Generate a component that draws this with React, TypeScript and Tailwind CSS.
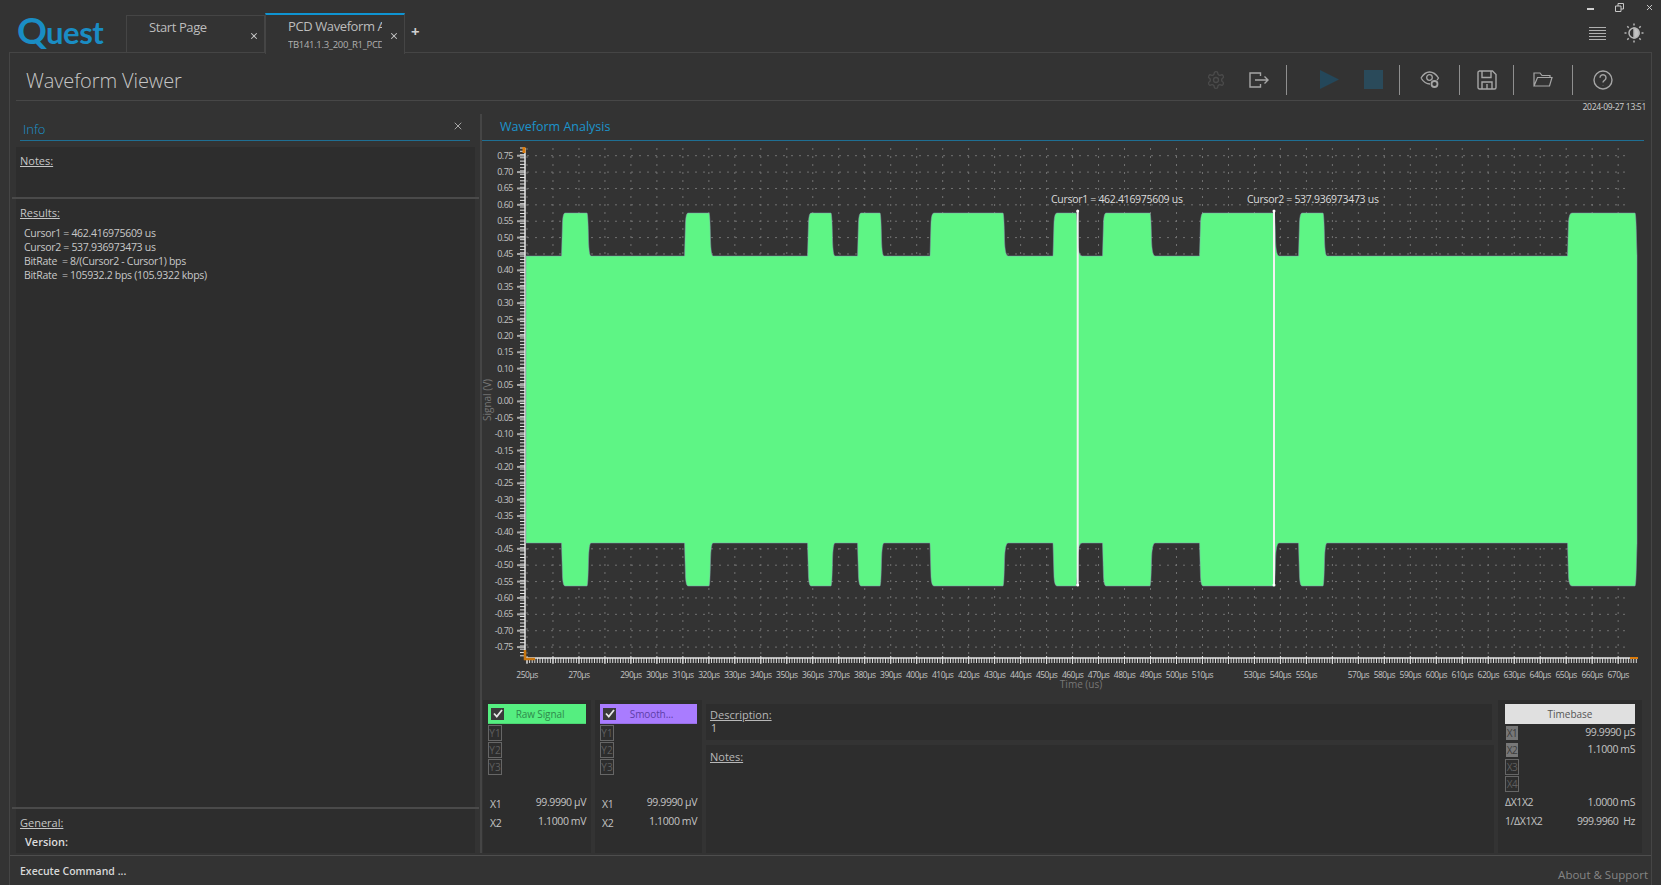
import { X } from "lucide-react";

const PULSES = [
  [561.5, 564, 587, 591],
  [684.5, 687, 709, 713],
  [807.5, 810, 831, 835],
  [857.5, 860, 880, 884],
  [930, 933, 1003, 1008],
  [1053, 1056, 1076, 1082],
  [1102.5, 1105, 1150, 1155],
  [1199.5, 1202, 1274, 1279],
  [1298.5, 1301, 1323, 1327],
  [1567.5, 1571, 1635, 1637],
];

const SKIP_LABELS = [260, 280, 520, 560];
const FONT = "font-['Open_Sans','Noto_Sans',sans-serif]";

function waveformPath() {
  const top = PULSES.map(([a, b, c, d]) => `L${a} 256 L${a + 1} 222 Q${a + 1.5} 213 ${b + 1} 213 L${c} 213 Q${c + 1} 213 ${c + 1.5} 240 Q${c + 2} 256 ${d} 256`).join(" ");
  const bottom = [...PULSES].reverse().map(([a, b, c, d]) => `L${d} 543 Q${c + 2} 543 ${c + 1.5} 560 Q${c + 1} 586 ${c} 586 L${b + 1} 586 Q${a + 1.5} 586 ${a + 1} 577 L${a} 543`).join(" ");
  return `M526 256 ${top} L1637 256 L1637 543 ${bottom} L526 543 Z`;
}

function yLabel(i: number) {
  const v = 0.75 - i * 0.05;
  return Math.abs(v) < 0.001 ? "0.00" : v.toFixed(2);
}

function Chart() {
  const ys = Array.from({ length: 31 }, (_, i) => 155.7 + i * 16.38);
  const xs = Array.from({ length: 43 }, (_, i) => 527 + i * 25.98);
  const yMinor: string[] = [];
  for (let y = 148; y < 658; y += 3.276) yMinor.push(`M520 ${y.toFixed(1)}H525`);
  const xMinor: string[] = [];
  for (let x = 527; x < 1637; x += 2.598) xMinor.push(`M${x.toFixed(1)} 658V663`);

  return (
    <svg width="1168" height="559" viewBox="482 141 1168 559" className="block shrink-0">
      <g stroke="#727272" strokeWidth="1" strokeDasharray="2 6">
        {ys.map((y) => (
          <path key={y} d={`M527 ${y}H1630`} />
        ))}
        {xs.map((x) => (
          <path key={x} d={`M${x} 148V656`} />
        ))}
      </g>
      <path d={yMinor.join("")} stroke="#e4e4e4" strokeWidth="1" />
      <path d={xMinor.join("")} stroke="#d8d8d8" strokeWidth="1" />
      {ys.map((y) => (
        <path key={y} d={`M517 ${y}H525`} stroke="#a8a8a8" strokeWidth="2" />
      ))}
      {xs.map((x) => (
        <path key={x} d={`M${x} 656V664`} stroke="#e4e4e4" strokeWidth="1" />
      ))}
      <path d="M525 148V658H1637" fill="none" stroke="#e8e8e8" strokeWidth="1.5" />
      <path d="M524 147V153" stroke="#d97a0c" strokeWidth="3" />
      <path d="M525 650V659H535" fill="none" stroke="#c9760f" strokeWidth="2.5" />
      <path d="M1630 658H1638" stroke="#d97a0c" strokeWidth="2" />

      <path d={waveformPath()} fill="#5ef585" stroke="#8a9ab0" strokeWidth="0.5" />

      <path d="M1077.7 211V586" stroke="#f2f2f2" strokeWidth="2" />
      <path d="M1274 211V586" stroke="#f2f2f2" strokeWidth="2" />
      <circle cx="1077.7" cy="211" r="1.5" fill="#fff" />
      <circle cx="1274" cy="211" r="1.5" fill="#fff" />
      <circle cx="1077.7" cy="585" r="1.5" fill="#fff" />
      <circle cx="1274" cy="585" r="1.5" fill="#fff" />

      <g className={`${FONT} text-[10.5px] fill-[#dcdcdc] tracking-[-0.3px]`}>
        <text x="1051" y="203">Cursor1 = 462.416975609 us</text>
        <text x="1247" y="203">Cursor2 = 537.936973473 us</text>
      </g>

      <g className={`${FONT} text-[9px] fill-[#c4c4c4] tracking-[-0.5px]`} textAnchor="end">
        {ys.map((y, i) => (
          <text key={y} x="513" y={y + 3}>{yLabel(i)}</text>
        ))}
      </g>
      <g className={`${FONT} text-[8.5px] fill-[#c4c4c4] tracking-[-0.5px]`} textAnchor="middle">
        {xs.map((x, i) => {
          const value = 250 + i * 10;
          if (SKIP_LABELS.includes(value)) return null;
          return <text key={x} x={x} y={678}>{value}µs</text>;
        })}
      </g>
      <g className={`${FONT} text-[10px] fill-[#777777]`} textAnchor="middle">
        <text x="1081" y="688">Time (us)</text>
        <text x="0" y="0" transform="translate(491 400) rotate(-90)">Signal (V)</text>
      </g>
    </svg>
  );
}

function Logo() {
  return (
    <div className="flex items-baseline pl-[17px] pt-[10px] text-[#1a8dc4] font-['Lato',sans-serif] font-bold w-[126px] h-[52px] shrink-0">
      <span className="relative text-[37px] leading-[40px] tracking-[-1px]">Q</span>
      <span className="text-[31px] leading-[40px] tracking-[-0.4px]">uest</span>
    </div>
  );
}

function Tab({ title, sub, active }: { title: string; sub?: string; active?: boolean }) {
  return (
    <div
      className={
        active
          ? "relative z-10 flex h-[41px] w-[140px] mt-[13px] -mb-[2px] border-x border-[#454545] border-t-2 border-t-[#0f94d2] bg-[#333333] pl-[22px] pr-[2px]"
          : "flex h-[37px] w-[139px] mt-[15px] border-x border-t border-[#454545] pl-[22px] pr-[2px]"
      }
    >
      <div className="flex-1 min-w-0 overflow-hidden whitespace-nowrap pt-[2px]">
        <div className="text-[13px] tracking-[-0.4px] leading-[19px] text-[#bdbdbd]">{title}</div>
        {sub && <div className="text-[9.5px] tracking-[-0.3px] leading-[14px] mt-[2px] text-[#b0b0b0]">{sub}</div>}
      </div>
      <div className="flex w-[20px] items-center justify-center pl-[3px] pt-[3px]">
        <X size={10} strokeWidth={2.5} className="text-[#c8c8c8]" />
      </div>
    </div>
  );
}

function Sep() {
  return <div className="w-px h-[30px] bg-[#8f8f8f] shrink-0" />;
}

function Toolbar() {
  const stroke = "#a6a6a6";
  return (
    <div className="flex items-center h-full pt-[6px] pr-[12px]">
      <svg width="20" height="20" viewBox="0 0 24 24" fill="none" stroke="#4b4b4b" strokeWidth="1.6" className="mr-[23px]">
        <path d="M12.2 2h-.4a2 2 0 0 0-2 2v.2a2 2 0 0 1-1 1.7l-.4.3a2 2 0 0 1-2 0l-.2-.1a2 2 0 0 0-2.7.7l-.2.4a2 2 0 0 0 .7 2.7l.2.1a2 2 0 0 1 1 1.7v.5a2 2 0 0 1-1 1.8l-.2.1a2 2 0 0 0-.7 2.7l.2.4a2 2 0 0 0 2.7.7l.2-.1a2 2 0 0 1 2 0l.4.3a2 2 0 0 1 1 1.7v.2a2 2 0 0 0 2 2h.4a2 2 0 0 0 2-2v-.2a2 2 0 0 1 1-1.7l.4-.3a2 2 0 0 1 2 0l.2.1a2 2 0 0 0 2.7-.7l.2-.4a2 2 0 0 0-.7-2.7l-.2-.1a2 2 0 0 1-1-1.8v-.5a2 2 0 0 1 1-1.7l.2-.1a2 2 0 0 0 .7-2.7l-.2-.4a2 2 0 0 0-2.7-.7l-.2.1a2 2 0 0 1-2 0l-.4-.3a2 2 0 0 1-1-1.7V4a2 2 0 0 0-2-2z" />
        <circle cx="12" cy="12" r="3" />
      </svg>
      <svg width="20" height="16" viewBox="0 0 20 16" fill="none" stroke={stroke} strokeWidth="1.4" className="mr-[17px]">
        <path d="M11.5 4V1H1v14h10.500v-3M6 8h13M15.500 4.500 19 8l-3.500 3.500" />
      </svg>
      <Sep />
      <svg width="19" height="19" viewBox="0 0 19 19" className="ml-[33px] mr-[25px]">
        <path d="M0 0L19 9.500L0 19Z" fill="#24475a" />
      </svg>
      <div className="w-[19px] h-[19px] bg-[#2a4a5a] mr-[16px]" />
      <Sep />
      <svg width="20" height="18" viewBox="0 0 20 18" fill="none" stroke={stroke} strokeWidth="1.300" className="mx-[19.500px]">
        <path d="M1 7c2.500-4 5.500-6 8.500-6s6.500 2 9 6c-.5.8-1 1.500-1.500 2M10 13c-3.500 0-6.500-2-9-6" />
        <circle cx="9.500" cy="6.500" r="2.800" />
        <circle cx="14.500" cy="13" r="3" strokeWidth="1.800" />
      </svg>
      <Sep />
      <svg width="20" height="20" viewBox="0 0 20 20" fill="none" stroke={stroke} strokeWidth="1.400" className="mx-[16.500px]">
        <path d="M2 1h13.500L19 4.500V17.500a1.500 1.500 0 0 1-1.500 1.500h-15A1.500 1.500 0 0 1 1 17.500v-15A1.500 1.500 0 0 1 2.500 1z" />
        <path d="M5 1v6.500h9V1M5 19v-7h10v7M10 14v5" />
      </svg>
      <Sep />
      <svg width="20" height="15" viewBox="0 0 20 15" fill="none" stroke={stroke} strokeWidth="1.200" className="mx-[19px]">
        <path d="M1 14V1h6l2 2.500h8V5.500M1 14h15.500L19 5.500H4.500L1 14z" />
      </svg>
      <Sep />
      <svg width="20" height="20" viewBox="0 0 20 20" fill="none" stroke={stroke} strokeWidth="1.400" className="mx-[20px]">
        <circle cx="10" cy="10" r="9" />
        <path d="M7 7.800a3 3 0 1 1 4.500 2.600c-1 .6-1.500 1.100-1.500 2.200M10 15.200v.3" />
      </svg>
    </div>
  );
}

function RightTop() {
  return (
    <div className="ml-auto flex flex-col items-end pr-[7px]">
      <div className="flex items-center h-[12px] mt-[1px] gap-[21px]">
        <div className="w-[7px] h-[2px] bg-[#d0d0d0] mt-[3px]" />
        <svg width="9" height="9" viewBox="0 0 9 9" fill="none" stroke="#c8c8c8" strokeWidth="1">
          <path d="M.5 3h5.500v5.500H.5zM3 3V.5h5.500V6H6" />
        </svg>
        <X size={9} strokeWidth={2.5} className="text-[#d0d0d0]" />
      </div>
      <div className="flex items-center gap-[18px] mt-[10px] pr-[10px]">
        <div className="flex flex-col gap-[2px] w-[17px]">
          <div className="h-px bg-[#b0b0b0]" />
          <div className="h-px bg-[#b0b0b0]" />
          <div className="h-px bg-[#b0b0b0]" />
          <div className="h-px bg-[#b0b0b0]" />
          <div className="h-px bg-[#b0b0b0]" />
        </div>
        <svg width="20" height="20" viewBox="0 0 20 20" fill="none" stroke="#b5b5b5" strokeWidth="1.500">
          <circle cx="10" cy="10" r="5" />
          <path d="M10 5a5 5 0 0 1 0 10z" fill="#c4c4c4" />
          <path d="M10 .5v2M10 17.500v2M.5 10h2M17.500 10h2M3.300 3.300l1.400 1.400M15.300 15.300l1.400 1.400M3.300 16.700l1.400-1.400M15.300 4.700l1.400-1.400" />
        </svg>
      </div>
    </div>
  );
}

function InfoPanel() {
  return (
    <div className="flex flex-col w-[470px] shrink-0 h-full">
      <div className="flex items-end justify-between mx-[10px] h-[24px] border-b border-[#1f6f93] pl-[3px] pr-[6px] pb-[2px] box-content">
        <span className="text-[13px] leading-[18px] font-light text-[#1b93cc]">Info</span>
        <X size={12} strokeWidth={1.800} className="text-[#b4b4b4] mb-[6px]" />
      </div>
      <div className="ml-[6px] mr-[5px] mt-[6px] h-[50px] bg-[#2d2d2d] px-[4px]">
        <span className="text-[11px] text-[#c6c6c6] underline">Notes:</span>
      </div>
      <div className="ml-[2px] mr-px h-[2px] bg-[#4a4a4a]" />
      <div className="ml-[6px] mr-[5px] flex-1 bg-[#2d2d2d] px-[4px] pt-[6px]">
        <div className="text-[11px] text-[#c6c6c6] underline leading-[15px]">Results:</div>
        <div className="mt-[6px] pl-[4px] text-[10.5px] tracking-[-0.3px] leading-[14px] text-[#c8c8c8]">
          <div>Cursor1 = 462.416975609 us</div>
          <div>Cursor2 = 537.936973473 us</div>
          <div>BitRate&nbsp; = 8/(Cursor2 - Cursor1) bps</div>
          <div>BitRate&nbsp; = 105932.2 bps (105.9322 kbps)</div>
        </div>
      </div>
      <div className="ml-[2px] mr-px h-[2px] bg-[#4a4a4a]" />
      <div className="ml-[6px] mr-[5px] h-[44px] bg-[#2d2d2d] px-[4px] pt-[6px]">
        <div className="text-[11px] text-[#c6c6c6] underline leading-[15px]">General:</div>
        <div className="mt-[4px] pl-[5px] text-[11px] leading-[15px] font-semibold text-[#dcdcdc]">Version:</div>
      </div>
    </div>
  );
}

function YBox({ label, filled }: { label: string; filled?: boolean }) {
  return (
    <div
      className={
        filled
          ? "flex h-[14px] w-[12px] ml-px items-center justify-center bg-[#777777] text-[10px] text-[#3c3c3c]"
          : "flex h-[16px] w-[14px] items-center justify-center border border-[#666666] text-[10px] text-[#5f5f5f]"
      }
    >
      {label}
    </div>
  );
}

function ChannelPanel({ title, headerClass, textClass, width }: { title: string; headerClass: string; textClass: string; width: string }) {
  return (
    <div className={`${width} shrink-0 bg-[#2d2d2d] px-[5px] pt-[4px]`}>
      <div className={`flex items-center h-[20px] border-b border-black/10 ${headerClass}`}>
        <div className="flex h-[12px] w-[13px] ml-[3px] items-center justify-center bg-[#3a3a3a]">
          <svg width="10" height="9" viewBox="0 0 10 9" fill="none" stroke="#e6e6e6" strokeWidth="1.800">
            <path d="M1 4.500 3.800 7.500 9 1" />
          </svg>
        </div>
        <span className={`flex-1 text-center text-[10px] tracking-[-0.1px] pt-[1px] pr-[10px] ${textClass}`}>{title}</span>
      </div>
      <div className="flex flex-col gap-[1px] mt-[1px]">
        <YBox label="Y1" />
        <YBox label="Y2" />
        <YBox label="Y3" />
      </div>
      <div className="mt-[20px] flex flex-col gap-[3px] text-[10.5px] tracking-[-0.4px] text-[#c4c4c4]">
        <div className="flex justify-between leading-[14px]">
          <span className="pl-[2px] pt-[2px]">X1</span>
          <span>99.9990 µV</span>
        </div>
        <div className="flex justify-between leading-[14px]">
          <span className="pl-[2px] pt-[2px]">X2</span>
          <span>1.1000 mV</span>
        </div>
      </div>
    </div>
  );
}

function TimebaseRow({ label, value, filled }: { label: string; value?: string; filled?: boolean }) {
  return (
    <div className="flex items-center justify-between h-[16px] text-[10.5px] tracking-[-0.4px] text-[#c4c4c4]">
      <YBox label={label} filled={filled} />
      {value && <span>{value}</span>}
    </div>
  );
}

function BottomPanels() {
  return (
    <div className="flex flex-1 pl-px gap-[4px]">
      <ChannelPanel title="Raw Signal" headerClass="bg-[#55ee80]" textClass="text-[#2f8a4c]" width="w-[108px]" />
      <ChannelPanel title="Smooth..." headerClass="bg-[#a97cff]" textClass="text-[#5d3ea8]" width="w-[107px]" />
      <div className="flex flex-col w-[788px] shrink-0 pt-[4px]">
        <div className="h-[36px] mr-[2px] bg-[#2d2d2d] px-[4px] pt-[3px]">
          <div className="text-[11px] leading-[15px] underline text-[#b8b8b8]">Description:</div>
          <div className="text-[10.5px] leading-[15px] pl-[1px] -mt-px text-[#c4c4c4]">1</div>
        </div>
        <div className="flex-1 mt-[5px] bg-[#2d2d2d] px-[4px] pt-[4px]">
          <div className="text-[11px] leading-[15px] underline text-[#b8b8b8]">Notes:</div>
        </div>
      </div>
      <div className="flex-1 mr-[9px] bg-[#2d2d2d] px-[7px] pt-[4px]">
        <div className="flex items-center justify-center h-[20px] bg-[#e0e0e0] text-[10px] text-[#555555]">Timebase</div>
        <div className="flex flex-col gap-[1px] mt-[1px]">
          <TimebaseRow label="X1" value="99.9990 µS" filled />
          <TimebaseRow label="X2" value="1.1000 mS" filled />
          <TimebaseRow label="X3" />
          <TimebaseRow label="X4" />
        </div>
        <div className="mt-[3px] flex flex-col gap-[5px] text-[10.5px] tracking-[-0.4px] leading-[14px] text-[#c4c4c4]">
          <div className="flex justify-between">
            <span>ΔX1X2</span>
            <span>1.0000 mS</span>
          </div>
          <div className="flex justify-between">
            <span>1/ΔX1X2</span>
            <span>999.9960&nbsp; Hz</span>
          </div>
        </div>
      </div>
    </div>
  );
}

export default function App() {
  return (
    <div className={`${FONT} flex flex-col w-[1661px] h-[885px] overflow-hidden bg-[#333333]`}>
      {/* Title bar with tabs */}
      <div className="flex h-[52px] shrink-0 items-start">
        <Logo />
        <Tab title="Start Page" />
        <Tab title="PCD Waveform Analysis" sub="TB141.1.3_200_R1_PCD_106" active />
        <span className="ml-[6px] mt-[22px] text-[15px] leading-[18px] font-bold text-[#d0d0d0]">+</span>
        <RightTop />
      </div>

      {/* Main frame */}
      <div className="flex flex-col flex-1 min-h-0 ml-[9px] mr-[9px] border-x border-t border-[#454545]">
        <div className="flex items-center justify-between h-[47px] mx-[6px] border-b border-[#474747] box-content shrink-0">
          <span className="pl-[10px] pt-[8px] text-[20px] tracking-[-0.1px] font-light text-[#c6c6c6]">Waveform Viewer</span>
          <Toolbar />
        </div>
        <div className="h-[13px] shrink-0 pr-[5px] text-right text-[8.5px] tracking-[-0.3px] leading-[12px] text-[#d0d0d0]">2024-09-27 13:51</div>

        <div className="flex flex-1 min-h-0">
          <InfoPanel />
          <div className="flex flex-col flex-1 min-w-0 border-l-2 border-[#454545]">
            <div className="flex items-center h-[26px] shrink-0 mr-[7px] pl-[18px] border-b border-[#1f6f93] box-content">
              <span className="text-[12.5px] text-[#1b93cc]">Waveform Analysis</span>
            </div>
            <Chart />
            <BottomPanels />
          </div>
        </div>

        <div className="flex items-center justify-between h-[30px] mt-[2px] shrink-0 border-t border-[#4d4d4d] pl-[10px] pr-[3px]">
          <span className="text-[10.5px] mt-[2px] font-semibold text-[#d8d8d8]">Execute Command ...</span>
          <span className="text-[11.5px] mt-[9px] text-[#858585]">About &amp; Support</span>
        </div>
      </div>
    </div>
  );
}
